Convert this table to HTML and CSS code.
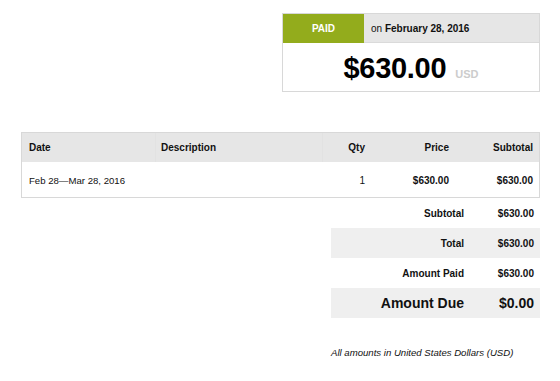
FILE: index.html
```html
<!DOCTYPE html>
<html>
<head>
<meta charset="utf-8">
<link rel="stylesheet" href="styles.css">
</head>
<body>
<div class="page">
  <div class="top">
    <div class="status-box">
      <div class="status-head">
        <div class="paid">PAID</div>
        <div class="paid-date">on <b>February 28, 2016</b></div>
      </div>
      <div class="amount"><span class="big">$630.00</span><span class="cur">USD</span></div>
    </div>
  </div>

  <div class="items">
    <div class="row head">
      <div class="c c-date">Date</div>
      <div class="c c-desc">Description</div>
      <div class="c c-qty">Qty</div>
      <div class="c c-price">Price</div>
      <div class="c c-sub">Subtotal</div>
    </div>
    <div class="row body">
      <div class="c c-date light">Feb 28—Mar 28, 2016</div>
      <div class="c c-desc"></div>
      <div class="c c-qty">1</div>
      <div class="c c-price strong">$630.00</div>
      <div class="c c-sub strong">$630.00</div>
    </div>
  </div>

  <div class="totals">
    <div class="trow"><div class="tl">Subtotal</div><div class="tv">$630.00</div></div>
    <div class="trow shade"><div class="tl">Total</div><div class="tv">$630.00</div></div>
    <div class="trow"><div class="tl">Amount Paid</div><div class="tv">$630.00</div></div>
    <div class="trow shade due"><div class="tl">Amount Due</div><div class="tv">$0.00</div></div>
  </div>

  <div class="note">All amounts in United States Dollars (USD)</div>
</div>
</body>
</html>
```
FILE: styles.css
```css
html, body {
  margin: 0;
  padding: 0;
  background: #fff;
}
body {
  font-family: "Liberation Sans", Arial, Helvetica, sans-serif;
  color: #111;
  font-size: 10px;
}
.page {
  width: 560px;
  padding: 13px 0 0 0;
  box-sizing: border-box;
}
.top {
  display: flex;
  justify-content: flex-end;
  padding-right: 20px;
}
.status-box {
  width: 258px;
  box-sizing: border-box;
  border: 1px solid #d8d8d8;
}
.status-head {
  display: flex;
  height: 29px;
}
.paid {
  width: 81px;
  background: #93ac1c;
  color: #fff;
  font-weight: bold;
  font-size: 10px;
  display: flex;
  align-items: center;
  justify-content: center;
}
.paid-date {
  flex: 1;
  background: #e6e6e6;
  display: flex;
  align-items: center;
  padding-left: 7px;
  font-size: 10px;
  white-space: pre;
  border-bottom: 1px solid #dadada;
}
.amount {
  height: 48px;
  display: flex;
  align-items: center;
  justify-content: center;
  gap: 9px;
}
.big {
  font-size: 29px;
  font-weight: bold;
  color: #000;
  letter-spacing: -0.3px;
  position: relative;
  top: 1px;
}
.cur {
  font-size: 11px;
  font-weight: bold;
  color: #cccccc;
  position: relative;
  top: 7px;
}
.items {
  margin: 40px 20px 0 21px;
  border: 1px solid #d8d8d8;
}
.row {
  display: grid;
  grid-template-columns: 133px 167px 49px 84px 1fr;
}
.row.head {
  height: 29px;
  background: #e6e6e6;
  font-weight: bold;
}
.row.head .c-desc, .row.head .c-qty {
  border-left: 1px solid #e2e2e2;
}
.row.body {
  height: 35px;
  background: #fff;
}
.c {
  display: flex;
  align-items: center;
  box-sizing: border-box;
}
.c-date { padding-left: 7px; }
.c-desc { padding-left: 5px; }
.c-qty, .c-price, .c-sub {
  justify-content: flex-end;
  padding-right: 6px;
}
.row.body .c { padding-top: 1px; }
.light { font-size: 9.6px; }
.strong { font-weight: bold; }
.totals {
  margin: 0 20px 0 331px;
}
.trow {
  display: grid;
  grid-template-columns: 1fr 70px;
  height: 30px;
  font-weight: bold;
  padding-right: 6px;
}
.trow.shade { background: #efefef; }
.tl, .tv {
  display: flex;
  align-items: center;
  justify-content: flex-end;
}
.due { font-size: 14px; }
.note {
  margin: 29px 0 0 331px;
  font-style: italic;
  font-size: 9.6px;
}
```
